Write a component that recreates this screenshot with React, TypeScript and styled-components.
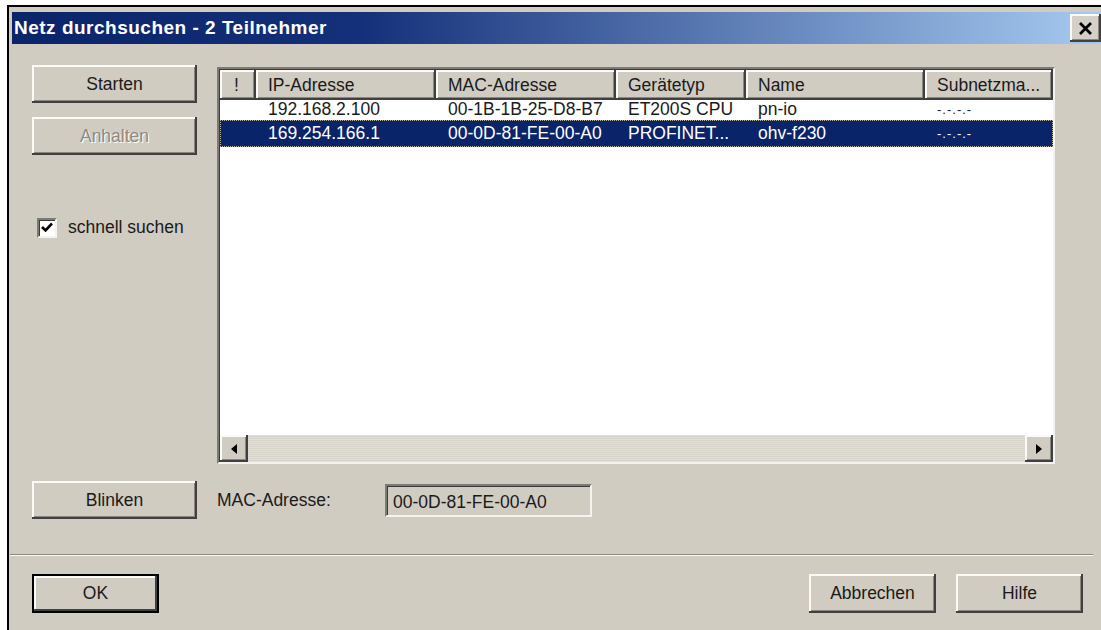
import styled, { createGlobalStyle, css } from "styled-components";

const COLS = "36px 180px 180px 130px 179px 1fr";

type Device = {
  ip: string;
  mac: string;
  type: string;
  name: string;
  subnet: string;
  selected?: boolean;
};

const devices: Device[] = [
  { ip: "192.168.2.100", mac: "00-1B-1B-25-D8-B7", type: "ET200S CPU", name: "pn-io", subnet: "-.-.-.-" },
  { ip: "169.254.166.1", mac: "00-0D-81-FE-00-A0", type: "PROFINET...", name: "ohv-f230", subnet: "-.-.-.-", selected: true },
];

const columns = ["!", "IP-Adresse", "MAC-Adresse", "Gerätetyp", "Name", "Subnetzma..."];

const App = () => {
  return (
    <>
      <GlobalStyle />
      <Window>
        <TitleBar>
          <TitleText>Netz durchsuchen - 2 Teilnehmer</TitleText>
          <CloseButton>
            <svg width="15" height="13" viewBox="0 0 15 13">
              <path d="M2 1 L13 12 M13 1 L2 12" stroke="#000" strokeWidth="2.8" />
            </svg>
          </CloseButton>
        </TitleBar>

        <Body>
          <TopArea>
            <LeftColumn>
              <Button>Starten</Button>
              <Button disabled>Anhalten</Button>
              <CheckRow>
                <CheckBox>
                  <svg width="12" height="11" viewBox="0 0 12 11">
                    <path d="M1 5 L4.5 8.5 L11 1.5" fill="none" stroke="#000" strokeWidth="2.6" />
                  </svg>
                </CheckBox>
                <span>schnell suchen</span>
              </CheckRow>
            </LeftColumn>

            <ListBox>
              <HeaderRow>
                {columns.map((c) => (
                  <HeaderCell key={c} center={c === "!"}>
                    {c}
                  </HeaderCell>
                ))}
              </HeaderRow>
              <Rows>
                {devices.map((d) => (
                  <Row key={d.mac} selected={d.selected}>
                    <Cell />
                    <Cell>{d.ip}</Cell>
                    <Cell>{d.mac}</Cell>
                    <Cell>{d.type}</Cell>
                    <Cell>{d.name}</Cell>
                    <Cell dim>{d.subnet}</Cell>
                  </Row>
                ))}
              </Rows>
              <ScrollBar>
                <ScrollArrow>
                  <svg width="6" height="10" viewBox="0 0 6 10">
                    <path d="M6 0 L0 5 L6 10 Z" fill="#000" />
                  </svg>
                </ScrollArrow>
                <ScrollTrack />
                <ScrollArrow>
                  <svg width="6" height="10" viewBox="0 0 6 10">
                    <path d="M0 0 L6 5 L0 10 Z" fill="#000" />
                  </svg>
                </ScrollArrow>
              </ScrollBar>
            </ListBox>
          </TopArea>

          <MacRow>
            <Button>Blinken</Button>
            <MacLabel>MAC-Adresse:</MacLabel>
            <ReadOnlyField>00-0D-81-FE-00-A0</ReadOnlyField>
          </MacRow>
        </Body>

        <Separator />

        <Footer>
          <Button small isDefault>
            OK
          </Button>
          <FooterRight>
            <Button small>Abbrechen</Button>
            <Button small>Hilfe</Button>
          </FooterRight>
        </Footer>
      </Window>
    </>
  );
};

export default App;

const GlobalStyle = createGlobalStyle`
  body {
    margin: 0;
    background: #fff;
    font-family: "Liberation Sans", Arial, sans-serif;
    overflow: hidden;
  }
`;

const raised = css`
  box-shadow: inset -2px -2px #404040, inset 2px 2px #fbfaf7, inset -3px -3px #8a877f;
`;

const sunken = css`
  border: 2px solid;
  border-color: #7c7a74 #f4f3ef #f4f3ef #7c7a74;
  box-shadow: inset 1px 1px #3a3a3a;
`;

// Dialogfenster
const Window = styled.div`
  margin: 5px 0 0 7px;
  width: 1094px;
  height: 625px;
  box-sizing: border-box;
  border-top: 2px solid #000;
  border-left: 2px solid #000;
  background: #d0ccc2;
  display: flex;
  flex-direction: column;
  overflow: hidden;
  color: #1a1a1a;
  font-size: 17.5px;
`;

// Titelleiste
const TitleBar = styled.div`
  margin: 5px 0 0 3px;
  height: 32px;
  display: flex;
  align-items: center;
  justify-content: space-between;
  background: linear-gradient(90deg, #0a246a 0%, #14307a 32%, #a6caf0 100%);
`;

const TitleText = styled.div`
  padding-left: 2px;
  color: #fff;
  font-weight: bold;
  font-size: 19px;
  letter-spacing: 0.5px;
`;

const CloseButton = styled.div`
  width: 31px;
  height: 28px;
  display: flex;
  align-items: center;
  justify-content: center;
  background: #d4d0c8;
  ${raised}
`;

const Body = styled.div`
  padding: 21px 0 0 23px;
  display: flex;
  flex-direction: column;
`;

const TopArea = styled.div`
  display: flex;
  gap: 20px;
`;

const LeftColumn = styled.div`
  width: 165px;
  display: flex;
  flex-direction: column;
  gap: 14px;
`;

// Schaltfläche
const Button = styled.div<{ disabled?: boolean; small?: boolean; isDefault?: boolean }>`
  width: ${(p) => (p.small ? "127px" : "165px")};
  height: ${(p) => (p.small ? "39px" : "38px")};
  box-sizing: border-box;
  display: flex;
  align-items: center;
  justify-content: center;
  background: #d0ccc2;
  ${raised}
  color: ${(p) => (p.disabled ? "#8d8a82" : "#1a1a1a")};
  text-shadow: ${(p) => (p.disabled ? "1px 1px #fff" : "none")};
  ${(p) =>
    p.isDefault &&
    css`
      border: 2px solid #000;
      box-shadow: inset -2px -2px #404040, inset 2px 2px #fbfaf7;
    `}
`;

const CheckRow = styled.div`
  margin-top: 48px;
  margin-left: 5px;
  display: flex;
  align-items: center;
  gap: 11px;
`;

const CheckBox = styled.div`
  width: 20px;
  height: 20px;
  box-sizing: border-box;
  background: #fff;
  ${sunken}
  display: flex;
  align-items: center;
  justify-content: center;
`;

// Teilnehmerliste
const ListBox = styled.div`
  margin-top: 2px;
  width: 838px;
  height: 397px;
  box-sizing: border-box;
  background: #fff;
  ${sunken}
  padding: 1px 0 0 1px;
  display: flex;
  flex-direction: column;
`;

const HeaderRow = styled.div`
  display: grid;
  grid-template-columns: ${COLS};
  height: 30px;
  position: relative;
  z-index: 1;
`;

const HeaderCell = styled.div<{ center?: boolean }>`
  background: #d0ccc2;
  ${raised}
  display: flex;
  align-items: center;
  padding-left: ${(p) => (p.center ? "14px" : "12px")};
  white-space: nowrap;
  overflow: hidden;
`;

const Rows = styled.div`
  flex: 1;
  margin-top: -2px;
`;

const Row = styled.div<{ selected?: boolean }>`
  display: grid;
  grid-template-columns: ${COLS};
  height: ${(p) => (p.selected ? "27px" : "22px")};
  align-items: center;
  ${(p) =>
    p.selected &&
    css`
      background: #0a246a;
      color: #fff;
      outline: 1px dotted #b9b4a8;
      outline-offset: -1px;
    `}
`;

const Cell = styled.div<{ dim?: boolean }>`
  padding-left: 12px;
  white-space: nowrap;
  overflow: hidden;
  font-size: ${(p) => (p.dim ? "13px" : "inherit")};
  letter-spacing: ${(p) => (p.dim ? "1px" : "0")};
`;

const ScrollBar = styled.div`
  height: 27px;
  display: flex;
`;

const ScrollArrow = styled.div`
  width: 28px;
  background: #d0ccc2;
  ${raised}
  display: flex;
  align-items: center;
  justify-content: center;
`;

const ScrollTrack = styled.div`
  flex: 1;
  background: repeating-linear-gradient(0deg, #e2dfd8 0 1px, #d6d3cb 1px 2px);
`;

const MacRow = styled.div`
  margin-top: 17px;
  display: flex;
  align-items: center;
  gap: 20px;
`;

const MacLabel = styled.div`
  width: 148px;
`;

const ReadOnlyField = styled.div`
  width: 207px;
  height: 33px;
  box-sizing: border-box;
  ${sunken}
  display: flex;
  align-items: center;
  padding: 4px 0 0 6px;
`;

const Separator = styled.div`
  margin: 35px 8px 0 1px;
  height: 1px;
  background: #8a877f;
  border-bottom: 1px solid #fbfaf7;
`;

const Footer = styled.div`
  margin-top: 18px;
  padding: 0 18px 0 23px;
  display: flex;
  justify-content: space-between;
`;

const FooterRight = styled.div`
  display: flex;
  gap: 20px;
`;
